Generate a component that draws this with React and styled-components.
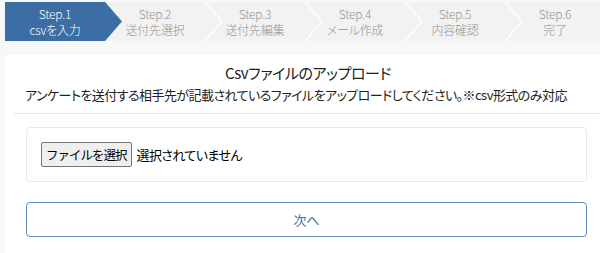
import React from 'react';
import styled, { createGlobalStyle } from 'styled-components';

const steps = [
  { no: 'Step.1', label: 'csvを入力' },
  { no: 'Step.2', label: '送付先選択' },
  { no: 'Step.3', label: '送付先編集' },
  { no: 'Step.4', label: 'メール作成' },
  { no: 'Step.5', label: '内容確認' },
  { no: 'Step.6', label: '完了' },
];

function App() {
  const current = 0;

  return (
    <>
      <GlobalStyle />
      <Page>
        <StepBar>
          {steps.map((s, i) => (
            <Step key={s.no} active={i === current}>
              <span>{s.no}</span>
              <span>{s.label}</span>
              {i < steps.length - 1 && (
                <Arrow viewBox="0 0 17 39" preserveAspectRatio="none">
                  {i === current ? (
                    <polygon points="0,0 17,19.5 0,39" fill="#3c6da5" />
                  ) : (
                    <polyline points="0,0 17,19.5 0,39" fill="none" stroke="#ffffff" strokeWidth="1.2" />
                  )}
                </Arrow>
              )}
            </Step>
          ))}
        </StepBar>

        <Panel>
          <Header>
            <Title>Csvファイルのアップロード</Title>
            <Lead>アンケートを送付する相手先が記載されているファイルをアップロードしてください。※csv形式のみ対応</Lead>
          </Header>
          <Body>
            <FileCard>
              <FileButton type="button">ファイルを選択</FileButton>
              <FileName>選択されていません</FileName>
            </FileCard>
            <NextButton type="button">次へ</NextButton>
          </Body>
        </Panel>
      </Page>
    </>
  );
}

const GlobalStyle = createGlobalStyle`
  body {
    margin: 0;
    background-color: #f7f8fa;
    font-family: "Noto Sans CJK JP", "Noto Sans", sans-serif;
    font-feature-settings: "palt";
    font-weight: 400;
    color: #222222;
    overflow: hidden;
  }
`;

const Page = styled.div`
  width: 600px;
  padding: 2px 0 0 5px;
  height: 251px;
`;

const StepBar = styled.div`
  display: flex;
  height: 39px;
  background-color: #f2f2f2;
`;

const Step = styled.div`
  position: relative;
  flex: 0 0 100px;
  display: flex;
  flex-direction: column;
  align-items: center;
  justify-content: center;
  font-size: 12px;
  font-weight: 300;
  letter-spacing: -0.2px;
  line-height: 16px;
  color: ${(p) => (p.active ? '#ffffff' : '#929292')};
  background-color: ${(p) => (p.active ? '#3c6da5' : 'transparent')};
`;

const Arrow = styled.svg`
  position: absolute;
  top: 0;
  right: -17px;
  width: 17px;
  height: 39px;
  z-index: 1;
`;

const Panel = styled.div`
  margin-top: 14px;
  background-color: #ffffff;
  border-radius: 4px 0 0 0;
  height: 200px;
`;

const Header = styled.div`
  margin-left: 9px;
  padding: 6px 0 8px 11px;
  border-bottom: 1px solid #e6e6e6;
`;

const Title = styled.h2`
  margin: 0;
  padding-right: 14px;
  text-align: center;
  font-size: 15px;
  font-weight: 400;
  letter-spacing: -0.4px;
  line-height: 24px;
`;

const Lead = styled.p`
  margin: 0;
  font-size: 13px;
  letter-spacing: -0.55px;
  line-height: 20px;
  white-space: nowrap;
`;

const Body = styled.div`
  padding: 13px 18px 0 21px;
  display: flex;
  flex-direction: column;
  gap: 20px;
`;

const FileCard = styled.div`
  display: flex;
  align-items: center;
  gap: 5px;
  height: 53px;
  padding: 0 14px;
  border: 1px solid #e9e9e9;
  border-radius: 4px;
`;

const FileButton = styled.button`
  height: 25px;
  padding: 0 4px;
  font-family: inherit;
  font-weight: 400;
  font-size: 12.5px;
  letter-spacing: -1px;
  color: #000000;
  background-color: #efefef;
  border: 1px solid #767676;
  border-radius: 2px;
`;

const FileName = styled.span`
  font-size: 13px;
  letter-spacing: -0.6px;
  color: #000000;
`;

const NextButton = styled.button`
  height: 35px;
  font-family: inherit;
  font-weight: 400;
  font-size: 13px;
  color: #3c6da5;
  background-color: #ffffff;
  border: 1px solid #5f8bbb;
  border-radius: 4px;
`;

export default App;
